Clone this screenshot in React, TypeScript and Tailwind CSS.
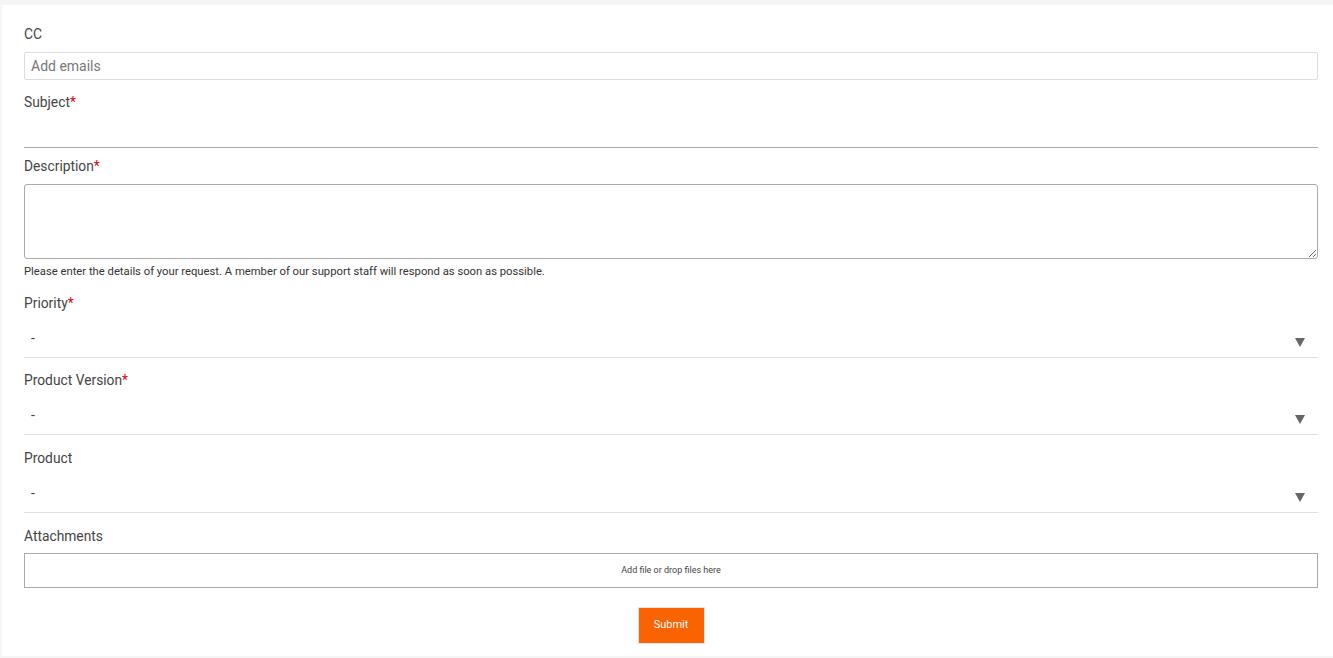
import React from "react";

const Label = ({ text, required }: { text: string; required?: boolean }) => (
  <label className="block h-5 text-[13.8px] leading-5 text-[#444]">
    {text}
    {required && <span className="text-[#e60000]">*</span>}
  </label>
);

const SelectField = ({
  label,
  required,
  className,
}: {
  label: string;
  required?: boolean;
  className?: string;
}) => (
  <div className={className}>
    <Label text={label} required={required} />
    <div className="flex h-[45px] items-center justify-between border-b border-[#e0e0e0] pl-[7px] pr-[13px] pt-[7px]">
      <span className="text-[14px] text-[#444]">-</span>
      <svg width="10" height="9" viewBox="0 0 10 9" className="mt-[8px]">
        <polygon points="0,0 10,0 5,9" fill="#666" />
      </svg>
    </div>
  </div>
);

export default function App() {
  return (
    <div
      className="min-h-[658px] bg-[#f5f5f5] pt-[5px]"
      style={{ fontFamily: "Roboto, 'Liberation Sans', sans-serif" }}
    >
      <div className="ml-[2px] flex flex-col bg-white pb-[12px] pl-[22px] pr-[15px] pt-[19px]">
        <Label text="CC" />
        <input
          className="mt-[8px] h-[28px] rounded-[2px] border border-[#ddd] px-[6px] text-[14px] text-[#444] outline-none placeholder:text-[#777]"
          placeholder="Add emails"
        />

        <div className="mt-[12px]">
          <Label text="Subject" required />
        </div>
        <input className="h-[36px] border-b border-[#aaa] text-[14px] outline-none" />

        <div className="mt-[8px]">
          <Label text="Description" required />
        </div>
        <textarea className="mt-[8px] h-[75px] resize-y rounded-[3px] border border-[#aaa] px-[6px] text-[14px] outline-none" />
        <p className="mt-[6px] h-[14px] text-[11.25px] leading-[14px] text-[#333]">
          Please enter the details of your request. A member of our support staff will respond as soon as possible.
        </p>

        <SelectField className="mt-[14px]" label="Priority" required />
        <SelectField className="mt-[12px]" label="Product Version" required />
        <SelectField className="mt-[13px]" label="Product" />

        <div className="mt-[13px]">
          <Label text="Attachments" />
          <div className="mt-[7px] flex h-[35px] items-center justify-center border border-[#aaa] text-[9px] text-[#444]">
            Add file or drop files here
          </div>
        </div>

        <div className="mt-[19px] flex justify-center">
          <button className="h-[37px] w-[67px] border border-[#e6e6e6] bg-[#f96302] text-[11px] text-white">
            Submit
          </button>
        </div>
      </div>
    </div>
  );
}
